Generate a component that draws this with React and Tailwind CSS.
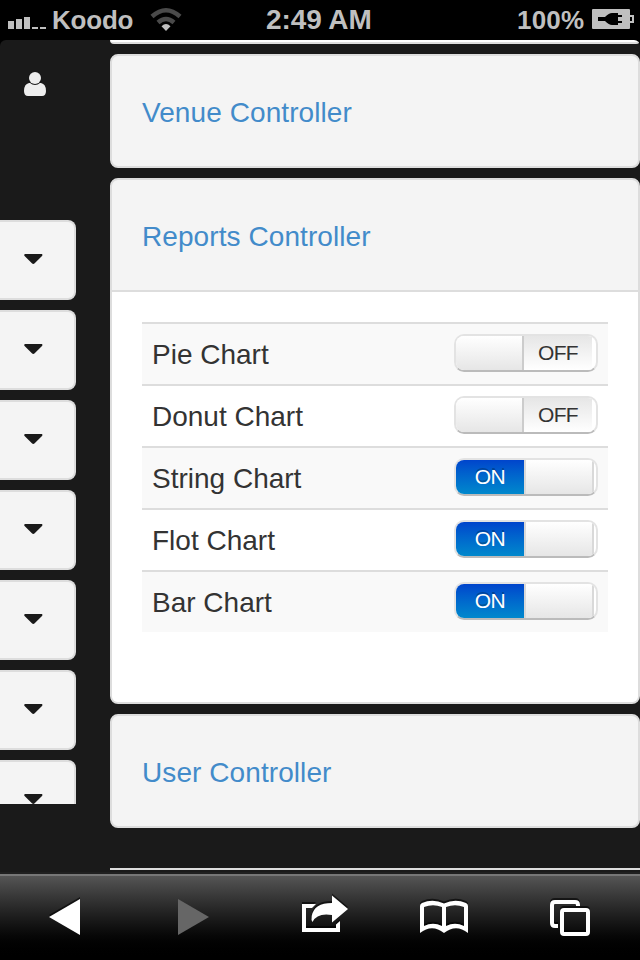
import React from "react";

const charts = [
  { name: "Pie Chart", on: false },
  { name: "Donut Chart", on: false },
  { name: "String Chart", on: true },
  { name: "Flot Chart", on: true },
  { name: "Bar Chart", on: true },
];

function StatusBar() {
  return (
    <header className="flex h-10 shrink-0 items-center bg-black text-[27px] leading-10 font-bold whitespace-nowrap text-[#bfbfbf]">
      <svg className="ml-2 h-10 w-[38px] shrink-0" viewBox="8 0 38 40" fill="#bfbfbf" shapeRendering="crispEdges">
        <rect x="8" y="21" width="6" height="8" />
        <rect x="16" y="19" width="6" height="10" />
        <rect x="24" y="17" width="6" height="12" />
        <rect x="32" y="27" width="6" height="2" />
        <rect x="40" y="27" width="6" height="2" />
      </svg>
      <span className="ml-[6px] w-[98px] shrink-0 text-[26px] tracking-[-0.2px]">Koodo</span>
      <svg className="h-10 w-8 shrink-0" viewBox="150 0 32 40" fill="none">
        <path d="M152 16.5Q166 4 180 16.5" stroke="#4a4a4a" strokeWidth="4.5" />
        <path d="M158 22.5Q166 15.5 174 22.5" stroke="#4a4a4a" strokeWidth="4.5" />
        <path d="M161.5 26.2Q166 21.8 170.5 26.2L166 31Z" fill="#bfbfbf" />
      </svg>
      <span className="ml-[84px] w-[251px] shrink-0 text-[28px] tracking-[-0.1px]">2:49 AM</span>
      <span className="w-[75px] shrink-0 text-[26px] tracking-[0.2px]">100%</span>
      <svg className="h-10 w-[43px] shrink-0" viewBox="592 0 43 40">
        <rect x="592" y="9" width="38" height="20" rx="1" fill="#bfbfbf" />
        <path d="M630 15h4v8h-4z" fill="#bfbfbf" />
        <rect x="630" y="17" width="2" height="4" fill="#000" />
        <path d="M598 17h7q4-4 7-4h6v2h4v2h-4v4h4v2h-4v2h-6q-3 0-7-4h-7z" fill="#000" />
      </svg>
    </header>
  );
}

function SideCard() {
  return (
    <div className="flex h-20 w-[76px] shrink-0 rounded-r-lg border-2 border-l-0 border-[#ddd] bg-[#f4f4f4] pt-8 pl-6">
      <svg className="h-[10px] w-[19px]" viewBox="0 0 19 10">
        <path d="M1 0H17.7Q19 .5 18 2L10.7 9.2Q9.3 10.6 7.9 9.2L.6 2Q-.4 .5 1 0z" fill="#1a1a1a" />
      </svg>
    </div>
  );
}

function Sidebar() {
  return (
    <aside className="w-[110px] shrink-0 pt-8">
      <svg className="ml-6 h-6 w-[22px]" viewBox="0 0 22 24" fill="#eee">
        <path d="M5 11H17Q22 12 22 19Q22 24 18 24H4Q0 24 0 19Q0 12 5 11Z" />
        <circle cx="11" cy="6" r="7" fill="#1a1a1a" />
        <circle cx="11" cy="6" r="6" />
      </svg>
      <div className="mt-[124px] flex h-[584px] flex-col gap-[10px] overflow-hidden">
        {[0, 1, 2, 3, 4, 5, 6].map((i) => (
          <SideCard key={i} />
        ))}
      </div>
    </aside>
  );
}

function Toggle({ on }) {
  return (
    <div className="flex h-[38px] w-[144px] overflow-hidden rounded-[10px] border-2 border-[#e3e3e3] border-b-[#bbb] bg-white text-[21px] leading-[34px]">
      {on ? (
        <>
          <span className="w-[68px] bg-linear-to-b from-[#0044cc] to-[#0088cc] text-center tracking-[-0.6px] text-white [text-shadow:0_-2px_0_rgba(0,0,0,0.25)]">
            ON
          </span>
          <span className="w-[70px] border-x-2 border-[#d9d9d9] bg-linear-to-b from-white to-[#e6e6e6]" />
        </>
      ) : (
        <>
          <span className="w-[68px] border-r-2 border-[#ccc] bg-linear-to-b from-white to-[#e6e6e6]" />
          <span className="w-[68px] bg-linear-to-b from-[#e6e6e6] to-white text-center tracking-[-0.6px] text-[#333]">
            OFF
          </span>
        </>
      )}
    </div>
  );
}

function Panel({ title, children }) {
  return (
    <section className="shrink-0 overflow-hidden rounded-lg border-2 border-[#ddd] bg-[#f4f4f4]">
      <h2 className="h-[110px] pl-[30px] text-[28px] leading-[114px] tracking-[0.08px] text-[#428bca]">
        {title}
      </h2>
      {children}
    </section>
  );
}

function Toolbar() {
  return (
    <nav className="h-[88px] shrink-0 border-t-2 border-[#202020]">
      <div className="flex h-[86px] items-start border-t-2 border-[#777] bg-linear-to-b from-[#555] to-black">
        <svg className="h-[84px] w-[640px]" viewBox="0 876 640 84">
          <defs>
            <filter id="edge" x="-10%" y="-10%" width="120%" height="120%" colorInterpolationFilters="sRGB">
              <feDropShadow dx="0" dy="-2" stdDeviation="0.2" floodColor="#000" floodOpacity="0.6" />
            </filter>
          </defs>
          <path filter="url(#edge)" d="M49 917L80 899V935Z" fill="#fff" />
          <path d="M178 899V935L209 917Z" fill="#666" />
          <g filter="url(#edge)">
            <path d="M316 904H302V932H340V921L336 924.5V928H306V908H312Z" fill="#fff" />
            <path d="M332 895.5L348 909L332 922.5V915Q317 912.5 312.5 922Q311 920 311.7 916Q314 903 332 903Z" fill="#fff" />
          </g>
          <g filter="url(#edge)" fill="#fff">
            <path
              fillRule="evenodd"
              d="M420 933V906Q420 904 422 903Q433 898.5 444 903.5Q455 898.5 466 903Q468 904 468 906V933Q456 923.5 444 933Q432 923.5 420 933ZM424 926Q433 921.5 442 926V907Q433 903.5 424 907ZM446 926Q455 921.5 464 926V907Q455 903.5 446 907Z"
            />
          </g>
          <g filter="url(#edge)" fill="none" stroke="#fff" strokeWidth="4">
            <path d="M558 926H555Q552 926 552 923V905Q552 902 555 902H575Q578 902 578 905V906" />
            <rect x="562" y="910" width="26" height="24" rx="2" />
          </g>
        </svg>
      </div>
    </nav>
  );
}

export default function App() {
  return (
    <div className="flex h-[960px] w-[640px] flex-col overflow-hidden bg-black font-['Liberation_Sans',Arial,sans-serif]">
      <StatusBar />
      <main className="flex h-[832px] shrink-0 overflow-hidden rounded-t-[6px] bg-[#1a1a1a]">
        <Sidebar />
        <div className="flex w-[530px] shrink-0 flex-col gap-[10px]">
          <div className="h-1 shrink-0 rounded-b-[6px] border-b-2 border-[#ddd] bg-white" />
          <Panel title="Venue Controller" />
          <Panel title="Reports Controller">
            <div className="h-[412px] border-t-2 border-[#ddd] bg-white px-[30px] pt-[30px]">
              {charts.map((c, i) => (
                <div
                  key={c.name}
                  className={
                    "flex h-[62px] items-start justify-between border-t-2 border-[#ddd] px-[10px] pt-[10px] " +
                    (i % 2 === 0 ? "bg-[#f9f9f9]" : "bg-white")
                  }
                >
                  <span className="text-[28px] leading-[42px] text-[#333]">{c.name}</span>
                  <Toggle on={c.on} />
                </div>
              ))}
            </div>
          </Panel>
          <Panel title="User Controller" />
          <div className="mt-[30px] h-[2px] shrink-0 bg-[#ddd]" />
        </div>
      </main>
      <Toolbar />
    </div>
  );
}
